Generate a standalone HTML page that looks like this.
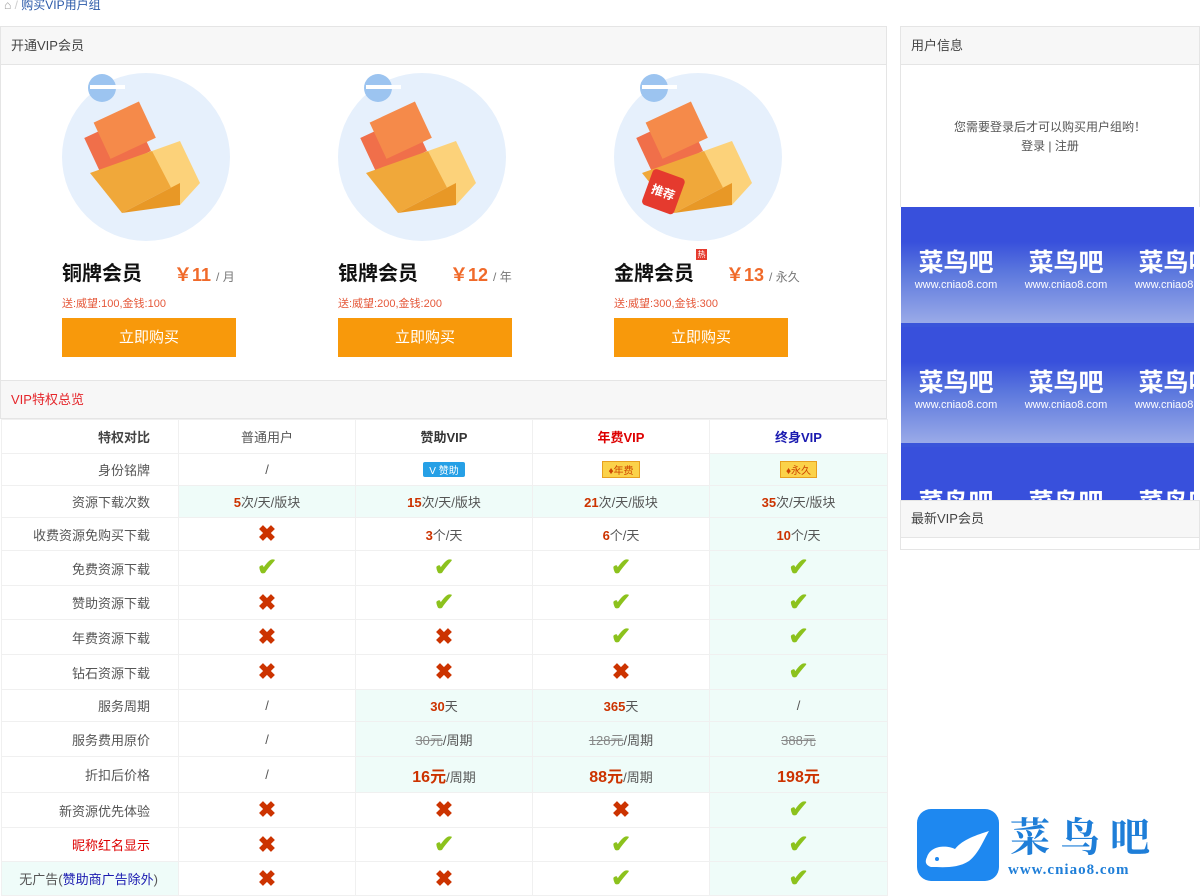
<!DOCTYPE html>
<html><head><meta charset="utf-8"><style>
*{margin:0;padding:0;box-sizing:border-box}
body{width:1201px;height:893px;overflow:hidden;background:#fff;font-family:"Liberation Sans","Noto Sans CJK SC",sans-serif;font-size:12px;color:#555;position:relative}
.abs{position:absolute}
.ph{position:absolute;background:#f7f7f7;border:1px solid #e5e5e5;padding-left:10px;font-size:13px;color:#444}
.card{position:absolute;top:73px;width:230px}
.circ{position:absolute;left:0;top:0;width:168px;height:168px;border-radius:50%;background:#e6f0fc}
.name{position:absolute;top:184px;left:0;font-size:20px;font-weight:bold;color:#111}
.price{position:absolute;top:188px;left:112px;font-size:18px;font-weight:bold;color:#f06a2a;white-space:nowrap}
.price small{font-size:12px;color:#777;font-weight:normal}
.gift{position:absolute;top:222px;left:0;font-size:11px;color:#e5583a;white-space:nowrap}
.btn{position:absolute;top:245px;left:0;width:174px;height:39px;background:#f8990b;color:#fff;font-size:15px;text-align:center;line-height:39px}
table{position:absolute;left:1px;top:419px;width:886px;border-collapse:collapse;table-layout:fixed}
td{border:1px solid #f0f0f0;text-align:center;font-size:13px;color:#555;padding:0}
td:first-child{text-align:right;padding-right:28px}
.c{background:#effcf9}
b.r{color:#c30;}
.x{color:#cc3300;font-size:22px;font-weight:bold;line-height:1}
.v{color:#8cc21d;font-size:24px;font-weight:bold;line-height:1}
.del{text-decoration:line-through;color:#888}
.tile{position:absolute;width:110px;height:116px;color:#fff;text-align:center}
</style></head><body>
<div class="abs" style="left:4px;top:-4px;font-size:12px;color:#999">⌂ <span style="color:#ccc">/</span> <span style="color:#2a58a8">购买VIP用户组</span></div>

<div class="ph" style="left:0;top:26px;width:887px;height:39px;line-height:37px">开通VIP会员</div>
<div class="abs" style="left:0;top:64px;width:887px;height:316px;border-left:1px solid #e5e5e5;border-right:1px solid #e5e5e5"></div>

<div class="card" style="left:62px">
<div class="circ"></div>
<svg class="abs" style="left:0;top:0" width="180" height="168"><circle cx="40" cy="15" r="14" fill="#9cc4f0"/><rect x="28" y="12" width="35" height="4" fill="#fff"/><g transform="rotate(-25 60 75)"><rect x="30" y="50" width="55" height="40" fill="#f06f4a"/><rect x="45" y="40" width="50" height="40" fill="#f58a4a"/></g><polygon points="28,100 90,78 118,110 60,140" fill="#f0a83a"/><polygon points="90,78 118,68 138,110 118,132" fill="#fcd27a"/><polygon points="60,140 118,132 118,110" fill="#e89826"/></svg>
<div class="name">铜牌会员</div><div class="price">￥11 <small>/ 月</small></div>
<div class="gift">送:威望:100,金钱:100</div><div class="btn">立即购买</div></div>
<div class="card" style="left:338px">
<div class="circ"></div>
<svg class="abs" style="left:0;top:0" width="180" height="168"><circle cx="40" cy="15" r="14" fill="#9cc4f0"/><rect x="28" y="12" width="35" height="4" fill="#fff"/><g transform="rotate(-25 60 75)"><rect x="30" y="50" width="55" height="40" fill="#f06f4a"/><rect x="45" y="40" width="50" height="40" fill="#f58a4a"/></g><polygon points="28,100 90,78 118,110 60,140" fill="#f0a83a"/><polygon points="90,78 118,68 138,110 118,132" fill="#fcd27a"/><polygon points="60,140 118,132 118,110" fill="#e89826"/></svg>
<div class="name">银牌会员</div><div class="price">￥12 <small>/ 年</small></div>
<div class="gift">送:威望:200,金钱:200</div><div class="btn">立即购买</div></div>
<div class="card" style="left:614px">
<div class="circ"></div>
<svg class="abs" style="left:0;top:0" width="180" height="168"><circle cx="40" cy="15" r="14" fill="#9cc4f0"/><rect x="28" y="12" width="35" height="4" fill="#fff"/><g transform="rotate(-25 60 75)"><rect x="30" y="50" width="55" height="40" fill="#f06f4a"/><rect x="45" y="40" width="50" height="40" fill="#f58a4a"/></g><polygon points="28,100 90,78 118,110 60,140" fill="#f0a83a"/><polygon points="90,78 118,68 138,110 118,132" fill="#fcd27a"/><polygon points="60,140 118,132 118,110" fill="#e89826"/><g transform="rotate(20 50 120)"><rect x="32" y="100" width="34" height="38" rx="4" fill="#e53a2e"/><text x="49" y="124" font-size="12" fill="#fff" text-anchor="middle" font-weight="bold">推荐</text></g></svg>
<div class="name">金牌会员</div><div class="abs" style="left:82px;top:176px;width:11px;height:11px;background:#e53a2e;color:#fff;font-size:8px;line-height:11px;text-align:center">热</div><div class="price">￥13 <small>/ 永久</small></div>
<div class="gift">送:威望:300,金钱:300</div><div class="btn">立即购买</div></div>

<div class="ph" style="left:0;top:380px;width:887px;height:39px;line-height:37px;color:#e5262b">VIP特权总览</div>

<table>
<colgroup><col style="width:177px"><col style="width:177px"><col style="width:177px"><col style="width:177px"><col style="width:178px"></colgroup>
<tr style="height:34px"><td style="font-weight:bold;color:#444">特权对比</td><td>普通用户</td><td style="color:#333;font-weight:bold">赞助VIP</td><td style="color:#d00;font-weight:bold">年费VIP</td><td style="color:#1a1ab0;font-weight:bold">终身VIP</td></tr>
<tr style="height:32px"><td>身份铭牌</td><td>/</td><td><span style="display:inline-block;background:#26a0e6;color:#fff;font-size:10px;padding:0 6px;border-radius:2px">V 赞助</span></td><td><span style="display:inline-block;background:#fbd24a;color:#c40;font-size:10px;padding:0 5px;border:1px solid #e7a020">♦年费</span></td><td class="c"><span style="display:inline-block;background:#fbd24a;color:#c40;font-size:10px;padding:0 5px;border:1px solid #e7a020">♦永久</span></td></tr>
<tr style="height:32px"><td>资源下载次数</td><td class="c"><b class="r">5</b>次/天/版块</td><td class="c"><b class="r">15</b>次/天/版块</td><td class="c"><b class="r">21</b>次/天/版块</td><td class="c"><b class="r">35</b>次/天/版块</td></tr>
<tr style="height:33px"><td>收费资源免购买下载</td><td><span class="x">✖</span></td><td><b class="r">3</b>个/天</td><td><b class="r">6</b>个/天</td><td class="c"><b class="r">10</b>个/天</td></tr>
<tr style="height:35px"><td>免费资源下载</td><td><span class="v">✔</span></td><td><span class="v">✔</span></td><td><span class="v">✔</span></td><td class="c"><span class="v">✔</span></td></tr>
<tr style="height:34px"><td>赞助资源下载</td><td><span class="x">✖</span></td><td><span class="v">✔</span></td><td><span class="v">✔</span></td><td class="c"><span class="v">✔</span></td></tr>
<tr style="height:35px"><td>年费资源下载</td><td><span class="x">✖</span></td><td><span class="x">✖</span></td><td><span class="v">✔</span></td><td class="c"><span class="v">✔</span></td></tr>
<tr style="height:35px"><td>钻石资源下载</td><td><span class="x">✖</span></td><td><span class="x">✖</span></td><td><span class="x">✖</span></td><td class="c"><span class="v">✔</span></td></tr>
<tr style="height:32px"><td>服务周期</td><td>/</td><td class="c"><b class="r">30</b>天</td><td class="c"><b class="r">365</b>天</td><td class="c">/</td></tr>
<tr style="height:35px"><td>服务费用原价</td><td>/</td><td class="c"><span class="del">30元</span>/周期</td><td class="c"><span class="del">128元</span>/周期</td><td class="c"><span class="del">388元</span></td></tr>
<tr style="height:36px"><td>折扣后价格</td><td>/</td><td class="c"><b class="r" style="font-size:16px">16元</b>/周期</td><td class="c"><b class="r" style="font-size:16px">88元</b>/周期</td><td class="c"><b class="r" style="font-size:16px">198元</b></td></tr>
<tr style="height:35px"><td>新资源优先体验</td><td><span class="x">✖</span></td><td><span class="x">✖</span></td><td><span class="x">✖</span></td><td class="c"><span class="v">✔</span></td></tr>
<tr style="height:34px"><td style="color:#d00">昵称红名显示</td><td><span class="x">✖</span></td><td><span class="v">✔</span></td><td><span class="v">✔</span></td><td class="c"><span class="v">✔</span></td></tr>
<tr style="height:34px"><td class="c" style="padding-right:20px">无广告(<span style="color:#1a1ab0">赞助商广告除外</span>)</td><td><span class="x">✖</span></td><td><span class="x">✖</span></td><td><span class="v">✔</span></td><td class="c"><span class="v">✔</span></td></tr>
</table>

<div class="ph" style="left:900px;top:26px;width:300px;height:39px;line-height:37px">用户信息</div>
<div class="abs" style="left:900px;top:64px;width:300px;height:143px;border-left:1px solid #e5e5e5;border-right:1px solid #e5e5e5;text-align:center;padding-top:54px;color:#555">您需要登录后才可以购买用户组哟！<br><span style="line-height:22px">登录 | 注册</span></div>
<div class="abs" style="left:901px;top:207px;width:293px;height:293px;overflow:hidden;background:#3a55da">
<div class="abs" style="left:0;top:0;width:293px;height:116px;background:linear-gradient(#3850dc 30%,#5a76dd 55%,#9aaae8)"></div>
<div class="abs" style="left:0;top:120px;width:293px;height:116px;background:linear-gradient(#3850dc 30%,#5a76dd 55%,#9aaae8)"></div>
<div class="abs" style="left:0;top:240px;width:293px;height:60px;background:#3850dc"></div>
<div class="tile" style="left:0;top:36px"><div style="font-size:25px;font-weight:bold">菜鸟吧</div><div style="font-size:11px">www.cniao8.com</div></div>
<div class="tile" style="left:110px;top:36px"><div style="font-size:25px;font-weight:bold">菜鸟吧</div><div style="font-size:11px">www.cniao8.com</div></div>
<div class="tile" style="left:220px;top:36px"><div style="font-size:25px;font-weight:bold">菜鸟吧</div><div style="font-size:11px">www.cniao8.com</div></div>
<div class="tile" style="left:0;top:156px"><div style="font-size:25px;font-weight:bold">菜鸟吧</div><div style="font-size:11px">www.cniao8.com</div></div>
<div class="tile" style="left:110px;top:156px"><div style="font-size:25px;font-weight:bold">菜鸟吧</div><div style="font-size:11px">www.cniao8.com</div></div>
<div class="tile" style="left:220px;top:156px"><div style="font-size:25px;font-weight:bold">菜鸟吧</div><div style="font-size:11px">www.cniao8.com</div></div>
<div class="tile" style="left:0;top:276px"><div style="font-size:25px;font-weight:bold">菜鸟吧</div></div>
<div class="tile" style="left:110px;top:276px"><div style="font-size:25px;font-weight:bold">菜鸟吧</div></div>
<div class="tile" style="left:220px;top:276px"><div style="font-size:25px;font-weight:bold">菜鸟吧</div></div>
</div>
<div class="ph" style="left:900px;top:500px;width:300px;height:38px;line-height:36px">最新VIP会员</div>
<div class="abs" style="left:900px;top:538px;width:300px;height:12px;border:1px solid #e5e5e5;border-top:none"></div>

<svg class="abs" style="left:917px;top:809px" width="84" height="72"><rect x="0" y="0" width="82" height="72" rx="14" fill="#1e88f0"/><path d="M10 48 C14 36 30 36 38 40 C46 30 60 26 72 22 C66 32 62 44 52 52 C40 60 24 58 14 58 C8 56 8 52 10 48 Z" fill="#fff"/><circle cx="20" cy="50" r="2" fill="#1e88f0"/></svg>
<div class="abs" style="left:1010px;top:806px;font-size:40px;font-weight:bold;color:#1e7ed8;letter-spacing:10px;font-family:'Noto Serif CJK SC',serif">菜鸟吧</div>
<div class="abs" style="left:1008px;top:862px;font-size:15px;font-weight:bold;color:#1e7ed8;font-family:'Liberation Serif',serif;letter-spacing:1px">www.cniao8.com</div>
</body></html>
